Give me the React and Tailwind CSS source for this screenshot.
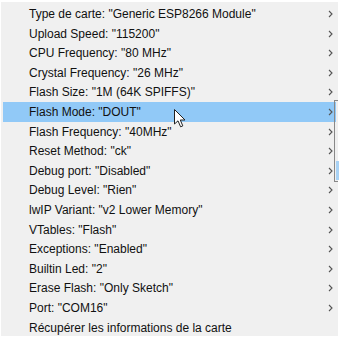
import React from "react";

const items = [
  'Type de carte: "Generic ESP8266 Module"',
  'Upload Speed: "115200"',
  'CPU Frequency: "80 MHz"',
  'Crystal Frequency: "26 MHz"',
  'Flash Size: "1M (64K SPIFFS)"',
  'Flash Mode: "DOUT"',
  'Flash Frequency: "40MHz"',
  'Reset Method: "ck"',
  'Debug port: "Disabled"',
  'Debug Level: "Rien"',
  'lwIP Variant: "v2 Lower Memory"',
  'VTables: "Flash"',
  'Exceptions: "Enabled"',
  'Builtin Led: "2"',
  'Erase Flash: "Only Sketch"',
  'Port: "COM16"',
];

function Chevron() {
  return (
    <svg width="5" height="8" viewBox="0 0 5 8" className="shrink-0">
      <path d="M1 1 L4 4 L1 7" fill="none" stroke="#555" strokeWidth="1.1" />
    </svg>
  );
}

export default function App() {
  return (
    <div
      className="relative w-[353px] h-[340px] bg-white overflow-hidden"
      style={{ fontFamily: '"Liberation Sans", Arial, sans-serif' }}
    >
      <div className="ml-[1px] mt-[2px] w-[337px] h-[334px] bg-[#f0f0f0] pt-[2.3px]">
        {items.map((label, i) => (
          <div
            key={label}
            className={`mx-[2px] h-[19.6px] flex items-center pl-[26px] pr-[3px] text-[12px] text-[#111] ${
              i === 5 ? "bg-[#91c9f7]" : ""
            }`}
          >
            <span className="flex-1 whitespace-nowrap">{label}</span>
            <Chevron />
          </div>
        ))}
        <div className="mx-[2px] h-[19.6px] flex items-center pl-[26px] text-[12px] text-[#111]">
          Récupérer les informations de la carte
        </div>
      </div>

      {/* edge of a window behind the menu */}
      <div className="absolute left-[334px] top-[100px] w-[4px] h-[82px] border border-l-[#888] border-t-[#888] border-b-[#888] border-r-0 border-solid" />
      <div className="absolute left-[336px] top-[161px] w-[3px] h-[19px] bg-[#a8d2f5]" />

      {/* mouse pointer */}
      <svg className="absolute left-[174px] top-[109px]" width="13" height="19" viewBox="0 0 13 19">
        <path
          d="M0.5 0.5 L0.5 15 L4 11.8 L6.6 17.8 L8.8 16.9 L6.3 11 L11 11 Z"
          fill="#fff"
          stroke="#222"
          strokeWidth="1"
          strokeLinejoin="round"
        />
      </svg>
    </div>
  );
}
